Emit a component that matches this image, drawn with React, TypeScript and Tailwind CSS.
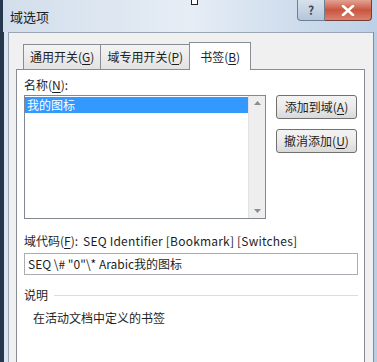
import React from 'react'

const U: React.FC<{ children: React.ReactNode }> = ({ children }) => (
  <span className="underline underline-offset-2">{children}</span>
)

const Tab: React.FC<{ active?: boolean; children: React.ReactNode }> = ({ active, children }) =>
  active ? (
    <div className="relative z-10 -mb-px h-[28px] px-[10px] flex items-center bg-white border border-b-0 border-[#898c95] text-[12px] text-[#1e1e1e]">
      {children}
    </div>
  ) : (
    <div className="h-[25px] px-[6px] flex items-center bg-gradient-to-b from-[#f4f4f4] to-[#e3e3e3] border border-b-0 border-[#898c95] -mr-px text-[12px] text-[#1e1e1e]">
      {children}
    </div>
  )

const Btn: React.FC<{ children: React.ReactNode }> = ({ children }) => (
  <div className="w-[81px] h-[24px] flex items-center justify-center rounded-[3px] border border-[#707070] bg-gradient-to-b from-[#f3f3f3] via-[#ebebeb] to-[#d9d9d9] text-[12px] text-[#1e1e1e]">
    {children}
  </div>
)

const App: React.FC = () => {
  return (
    <div className="w-[377px] h-[362px] overflow-hidden flex flex-col bg-[#c9d9ea] font-['Noto_Sans_CJK_SC',sans-serif]">
      {/* 标题栏 */}
      <div className="relative h-[32px] flex items-start bg-gradient-to-r from-[#d2deeb] via-[#e6edf5] to-[#bcd0e6] border-l-[3px] border-[#27374d]">
        <div className="pt-[7px] pl-[7px] text-[13px] text-[#1e1e1e]">域选项</div>
        <div className="absolute left-[188px] top-0 w-[7px] h-[5px] bg-white border border-t-0 border-[#222]" />
        <div className="ml-auto mr-[5px] flex">
          <div className="w-[28px] h-[21px] flex items-center justify-center rounded-bl-[4px] border border-t-0 border-[#6d7f96] bg-gradient-to-b from-[#d7e1ec] to-[#b5c6d9] text-[12px] font-bold text-[#3a4b60]">
            ?
          </div>
          <div className="w-[47px] h-[21px] flex items-center justify-center rounded-br-[4px] border border-t-0 border-l-0 border-[#7a3a33] bg-gradient-to-b from-[#e1a294] via-[#c9553f] to-[#d8826f]">
            <svg width="14" height="11" viewBox="0 0 14 11">
              <path d="M2 1 L12 10 M12 1 L2 10" stroke="#ffffff" strokeWidth="2.6" strokeLinecap="round" />
            </svg>
          </div>
        </div>
      </div>

      <div className="flex-1 flex min-h-0">
        {/* 左边框 */}
        <div className="w-[4px] bg-[#27374d]" />
        <div className="w-[4px] bg-[#dce6f1]" />

        {/* 客户区 */}
        <div className="flex-1 flex flex-col bg-[#f0f0f0] border-l border-t border-[#9aa6b3] pl-[7px] pr-[8px]">
          {/* 选项卡 */}
          <div className="flex items-end pt-[9px] pl-[7px]">
            <Tab>通用开关(<U>G</U>)</Tab>
            <Tab>域专用开关(<U>P</U>)</Tab>
            <Tab active>书签(<U>B</U>)</Tab>
          </div>

          {/* 选项卡面板 */}
          <div className="flex-1 bg-white border border-b-0 border-[#898c95] pl-[7px] pr-[6px] text-[12px] text-[#1e1e1e]">
            <div className="pt-[7px] leading-[16px]">名称(<U>N</U>):</div>
            <div className="mt-[2px] flex gap-[10px]">
              {/* 列表框 */}
              <div className="w-[242px] h-[124px] flex border border-[#828790]">
                <div className="flex-1 pt-[1px]">
                  <div className="h-[16px] bg-[#3399ff] text-white pl-[2px] leading-[16px]">我的图标</div>
                </div>
                <div className="w-[17px] bg-[#eeeeee] border-l border-[#e2e2e2] flex flex-col justify-between items-center py-[5px]">
                  <svg width="7" height="4" viewBox="0 0 7 4">
                    <path d="M0 4 L3.5 0 L7 4 Z" fill="#8c8c8c" />
                  </svg>
                  <svg width="7" height="4" viewBox="0 0 7 4">
                    <path d="M0 0 L3.5 4 L7 0 Z" fill="#8c8c8c" />
                  </svg>
                </div>
              </div>
              <div className="flex flex-col gap-[10px]">
                <Btn>添加到域(<U>A</U>)</Btn>
                <Btn>撤消添加(<U>U</U>)</Btn>
              </div>
            </div>

            <div className="mt-[14px] leading-[16px] flex">
              <span>域代码(<U>F</U>):</span>
              <span className="ml-[5px] tracking-[0.2px]">SEQ Identifier [Bookmark] [Switches]</span>
            </div>
            <div className="mt-[4px] w-[334px] h-[22px] border border-[#abadb3] pl-[3px] leading-[20px]">
              SEQ \# "0"\* Arabic我的图标
            </div>

            <div className="mt-[12px] flex items-center gap-[6px] w-[334px]">
              <span className="leading-[16px]">说明</span>
              <div className="flex-1 h-px bg-[#dcdcdc]" />
            </div>
            <div className="mt-[7px] pl-[9px] leading-[16px]">在活动文档中定义的书签</div>
          </div>
        </div>

        {/* 右边框 */}
        <div className="w-[1px] bg-[#7d8ea3]" />
        <div className="w-[3px] bg-[#b9cde4]" />
      </div>
    </div>
  )
}

export default App
